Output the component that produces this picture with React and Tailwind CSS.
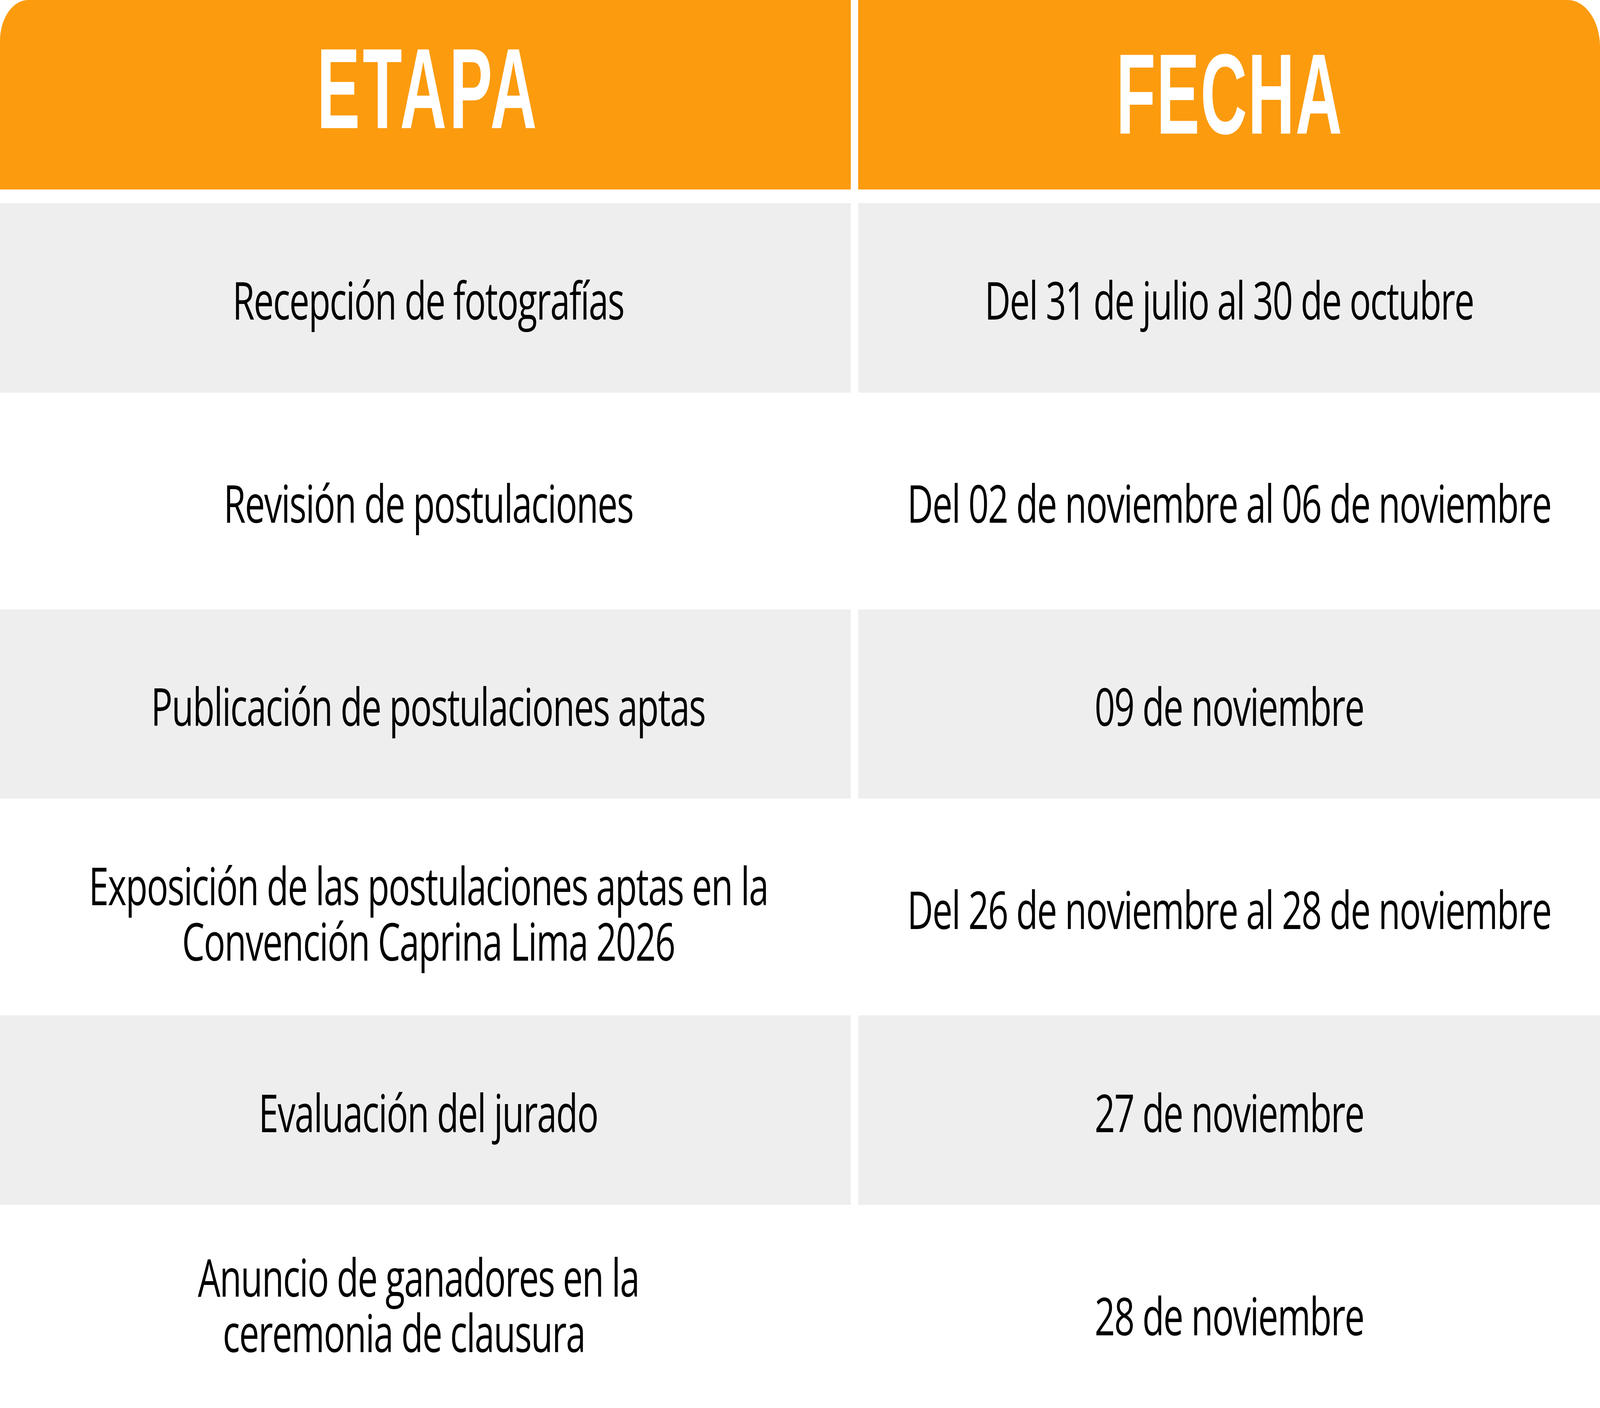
import React from "react";

// The design is 5953x3604; the layout is laid out relative to the viewport.
// Text is sized on the height axis and squeezed horizontally so that its
// proportions follow the frame's width/height ratio.
function useSquash() {
  if (typeof window === "undefined") return 1;
  return window.innerWidth / 5953 / (window.innerHeight / 3604);
}

function Txt({ children, sx, className = "" }) {
  return (
    <div
      className={`shrink-0 whitespace-nowrap origin-center ${className}`}
      style={{ transform: `scaleX(${sx})` }}
    >
      {children}
    </div>
  );
}

function Cell({ children, gray, left, className = "" }) {
  return (
    <div
      className={`flex items-center justify-center text-center text-black min-w-0 ${gray ? "bg-[#eeeeee]" : "bg-white"} ${left ? "pl-[0.3696vw]" : ""} ${className}`}
    >
      {children}
    </div>
  );
}

export default function App() {
  const sx = useSquash();
  return (
    <div className="w-screen h-screen bg-white overflow-hidden">
      <div className="grid grid-cols-[53.167%_1fr] grid-rows-[repeat(7,minmax(0,1fr))] gap-x-[0.4704vw] gap-y-[0.9711vh] h-full font-['Open_Sans','Noto_Sans',sans-serif] text-[3.69vh] leading-[3.94vh] tracking-[-0.0832vh]">
        {/* Header */}
        <div className="bg-[#fc9b0e] rounded-tl-[1.764vw_2.913vh] flex justify-center pt-[2.22vh] pl-[0.2016vw]">
          <Txt sx={sx}>
            <span className="inline-block scale-x-[0.82] font-['Liberation_Sans',Arial,sans-serif] font-bold text-white text-[8.13vh] leading-none tracking-[0.333vh] pl-[0.333vh]">
              ETAPA
            </span>
          </Txt>
        </div>
        <div className="bg-[#fc9b0e] rounded-tr-[2.016vw_3.33vh] flex justify-center pt-[2.608vh]">
          <Txt sx={sx}>
            <span className="inline-block scale-x-[0.82] font-['Liberation_Sans',Arial,sans-serif] font-bold text-white text-[8.13vh] leading-none tracking-[0.111vh] pl-[0.111vh]">
              FECHA
            </span>
          </Txt>
        </div>

        {/* Row 1 */}
        <Cell gray left className="pt-[0.2775vh]">
          <Txt sx={sx}>Recepción de fotografías</Txt>
        </Cell>
        <Cell gray className="pt-[0.2775vh]">
          <Txt sx={sx}>Del 31 de julio al 30 de octubre</Txt>
        </Cell>

        {/* Row 2 */}
        <Cell left className="pt-[0.2775vh]">
          <Txt sx={sx}>Revisión de postulaciones</Txt>
        </Cell>
        <Cell className="pt-[0.2775vh]">
          <Txt sx={sx}>Del 02 de noviembre al 06 de noviembre</Txt>
        </Cell>

        {/* Row 3 */}
        <Cell gray left className="pt-[0.2775vh]">
          <Txt sx={sx}>Publicación de postulaciones aptas</Txt>
        </Cell>
        <Cell gray className="pt-[0.2775vh]">
          <Txt sx={sx}>09 de noviembre</Txt>
        </Cell>

        {/* Row 4 */}
        <Cell left className="pt-[0.8324vh]">
          <Txt sx={sx} className="text-center">
            Exposición de las postulaciones aptas en la
            <br />
            Convención Caprina Lima 2026
          </Txt>
        </Cell>
        <Cell className="pt-[0.2775vh]">
          <Txt sx={sx}>Del 26 de noviembre al 28 de noviembre</Txt>
        </Cell>

        {/* Row 5 */}
        <Cell gray left className="pt-[0.2775vh]">
          <Txt sx={sx}>Evaluación del jurado</Txt>
        </Cell>
        <Cell gray className="pt-[0.2775vh]">
          <Txt sx={sx}>27 de noviembre</Txt>
        </Cell>

        {/* Row 6 */}
        <Cell left className="pb-[1.2764vh]">
          <Txt sx={sx} className="flex flex-col items-center">
            <span className="pr-[2.053vh]">Anuncio de ganadores en la</span>
            <span className="pr-[5.05vh]">ceremonia de clausura</span>
          </Txt>
        </Cell>
        <Cell className="pt-[0.2775vh]">
          <Txt sx={sx}>28 de noviembre</Txt>
        </Cell>
      </div>
    </div>
  );
}
